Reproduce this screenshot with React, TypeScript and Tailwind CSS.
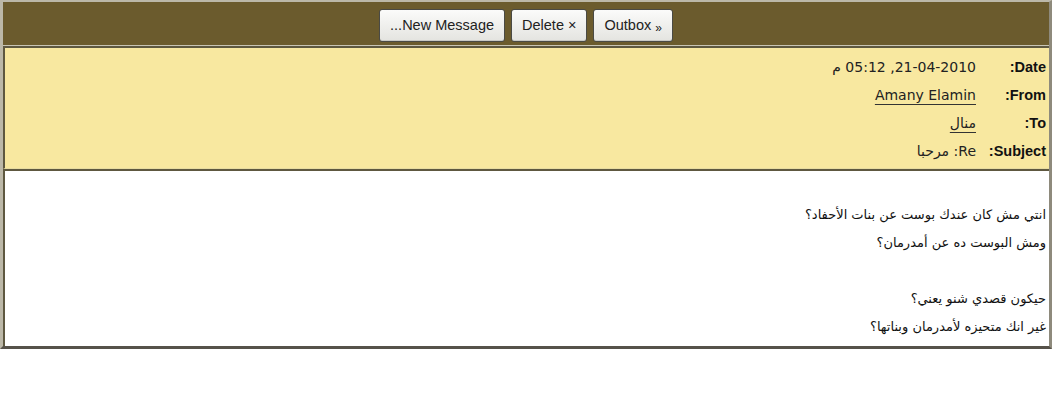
import React from "react";

const labelCls =
  "text-right pr-[3px] font-bold text-[14.5px] text-[#111] font-['Liberation_Sans',Arial,sans-serif]";
const valueCls =
  "pr-[3px] text-[14px] text-[#222] font-['DejaVu_Sans',sans-serif]";

function Btn({ children }: { children: React.ReactNode }) {
  return (
    <button
      dir="ltr"
      className="h-[33px] px-[10px] rounded-[3px] border border-[#4a4a44] bg-gradient-to-b from-[#fbfbfa] to-[#e4e4e0] text-[14.5px] text-[#222] font-['Liberation_Sans',Arial,sans-serif] shadow-[inset_0_-1px_0_#c9c9c4]"
    >
      {children}
    </button>
  );
}

export default function App() {
  const body = [
    "انتي مش كان عندك بوست عن بنات الأحفاد؟",
    "ومش البوست ده عن أمدرمان؟",
    "",
    "حيكون قصدي شنو يعني؟",
    "غير انك متحيزه لأمدرمان وبناتها؟",
  ];

  return (
    <div className="w-[1052px] bg-white" dir="rtl">
      <div className="border-t-2 border-l-[3px] border-r-[3px] border-b-[3px] border-t-[#bcb8a8] border-l-[#bcb8a8] border-r-[#8e8a7c] border-b-[#56524a]">
        {/* toolbar */}
        <div className="h-[43px] bg-[#6b5b2d] flex justify-center items-start pt-[7px] gap-[6px]" dir="ltr">
          <Btn>...New Message</Btn>
          <Btn>Delete ×</Btn>
          <Btn>
            Outbox <span className="text-[12px] align-[-2px]">»</span>
          </Btn>
        </div>
        <div className="h-px bg-[#c9c5b4]" />

        {/* header */}
        <div className="bg-[#f8e8a0] border-t-2 border-l-2 border-t-[#5e5840] border-l-[#5e5840] border-b border-b-[#e8dca0] pt-[5px] pb-[3px]">
          <div className="grid grid-cols-[70px_1fr] items-center">
            <div className={`${labelCls} h-7 leading-7`}>Date:</div>
            <div className={`${valueCls} h-7 leading-7`}>21-04-2010, 05:12 م</div>

            <div className={`${labelCls} h-7 leading-7`}>From:</div>
            <div className={`${valueCls} h-7 leading-7`}>
              <span className="underline underline-offset-[4px] decoration-[#333]">Amany Elamin</span>
            </div>

            <div className={`${labelCls} h-7 leading-7`}>To:</div>
            <div className={`${valueCls} h-7 leading-7`}>
              <span className="underline underline-offset-[4px] decoration-[#333]">منال</span>
            </div>

            <div className={`${labelCls} h-7 leading-7`}>Subject:</div>
            <div className={`${valueCls} h-7 leading-7`}>Re: مرحبا</div>
          </div>
        </div>

        {/* message body */}
        <div className="bg-white border-t-2 border-l-2 border-t-[#5e5840] border-l-[#5e5840] pt-[30px] pb-[5px] pr-[3px] text-[13px] text-[#111] font-['DejaVu_Sans',sans-serif]">
          {body.map((line, i) => (
            <div key={i} className="h-7 leading-7">
              {line}
            </div>
          ))}
        </div>
      </div>
    </div>
  );
}
